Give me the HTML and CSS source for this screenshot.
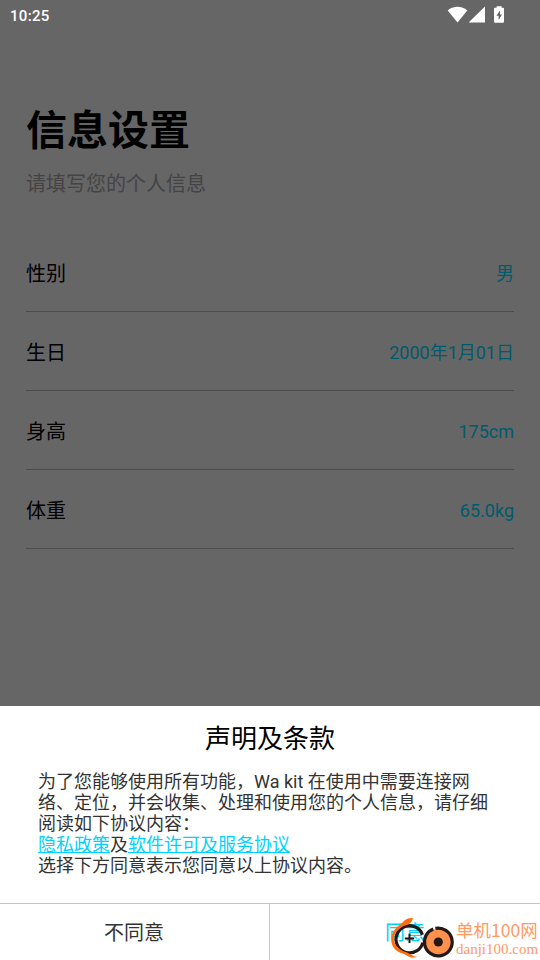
FILE: index.html
```html
<!DOCTYPE html>
<html lang="zh-CN">
<head>
<meta charset="utf-8">
<title>信息设置</title>
<link rel="stylesheet" href="styles.css">
</head>
<body>
<div class="screen">
  <header class="status">
    <span class="clock">10:25</span>
    <svg class="indicators" width="60" height="20" viewBox="446 5 60 20" fill="#fff">
      <path d="M447.7 10.4C453 5.7 462 5.7 467.3 10.4L457.5 22.4Z"/>
      <path d="M485 6.4V22.6H468.6Z"/>
      <path fill-rule="evenodd" d="M496.6 6.2h5v1.6h1.4q1 0 1 1v13q0 1-1 1h-8q-1 0-1-1v-13q0-1 1-1h1.6zM500 10.6l-3.6 5.2h2.2v4.2l3.5-5.4h-2.1z"/>
    </svg>
  </header>
  <main class="content">
    <h1 class="title">信息设置</h1>
    <p class="subtitle">请填写您的个人信息</p>
    <div class="row"><span class="label">性别</span><span class="value">男</span></div>
    <div class="row"><span class="label">生日</span><span class="value">2000年1月01日</span></div>
    <div class="row"><span class="label">身高</span><span class="value">175cm</span></div>
    <div class="row"><span class="label">体重</span><span class="value">65.0kg</span></div>
  </main>
  <section class="sheet">
    <h2 class="sheet-title">声明及条款</h2>
    <p class="terms">为了您能够使用所有功能，Wa kit 在使用中需要连接网<br>络、定位，并会收集、处理和使用您的个人信息，请仔细<br>阅读如下协议内容：<br><span class="link">隐私政策</span>及<span class="link">软件许可及服务协议</span><br>选择下方同意表示您同意以上协议内容。</p>
    <div class="actions">
      <div class="action decline">不同意</div>
      <div class="action agree">同意</div>
    </div>
  </section>
  <div class="watermark">
    <svg class="mark" width="66" height="46" viewBox="390 914 66 46" fill="none">
      <circle cx="409.6" cy="939.3" r="13.6" stroke="#231815" stroke-width="3.200" stroke-dasharray="77 8.450" transform="rotate(14 409.6 939.3)"/>
      <path d="M413 918C406 917.500 404 921 401 924C388 932 388 948 401 953C407 954 409 960 418.500 956.500C413 958 410 952.500 404 951.500C391 945 391 934 402 927C406 924 411 926 413 918Z" fill="#ff6d0c"/>
      <circle cx="438.3" cy="942" r="13" fill="#ff914d"/>
      <circle cx="438.3" cy="942" r="13.9" stroke="#231815" stroke-width="3.200" stroke-dasharray="84.500 2.840" transform="rotate(-102 438.3 942)"/>
      <circle cx="438.3" cy="942" r="4.600" fill="#231815"/>
      <path d="M404.800 938.400h9.400M409.500 933.700v9.400" stroke="#231815" stroke-width="2"/>
    </svg>
    <div class="brand"><span class="brand-name">单机100网</span><span class="brand-url">danji100.com</span></div>
  </div>
</div>
</body>
</html>
```
FILE: styles.css
```css
* { box-sizing: border-box; }
body { margin: 0; font-family: Roboto, "Noto Sans CJK SC", sans-serif; }
h1, h2, p { margin: 0; font-weight: 400; }
.screen { position: relative; width: 540px; height: 960px; overflow: hidden; background: #666; display: flex; flex-direction: column; }
.status { height: 32px; display: flex; justify-content: space-between; align-items: flex-start; padding: 5px 34px 0 10px; color: #fff; }
.clock { font-size: 15px; line-height: 22px; font-weight: 500; letter-spacing: .3px; }
.content { flex: 1; padding: 69px 26px 0; }
.title { font-size: 41px; line-height: 60px; font-weight: 700; color: #000; }
.subtitle { margin-top: 8px; font-size: 20px; line-height: 30px; color: #444; }
.row { height: 79px; display: flex; justify-content: space-between; align-items: center; padding-top: 3px; border-bottom: 1px solid #4d4d4d; }
.subtitle + .row { margin-top: 34px; }
.label { font-size: 20px; line-height: 30px; color: #000; }
.value { font-size: 18px; line-height: 30px; color: #005b6c; }
.sheet { height: 254px; background: #fff; display: flex; flex-direction: column; }
.sheet-title { padding-top: 13px; font-size: 26px; line-height: 40px; text-align: center; color: #000; }
.terms { margin: 12px 0 0 38px; font-size: 18px; line-height: 21px; color: #333; white-space: nowrap; }
.link { color: #00d2ff; text-decoration: underline; text-decoration-thickness: 1px; }
.actions { margin-top: auto; height: 57px; display: flex; border-top: 1px solid #c4c4c4; }
.action { width: 270px; display: flex; justify-content: center; padding-top: 14px; font-size: 20px; line-height: 30px; color: #333; }
.decline { border-right: 1px solid #c4c4c4; padding-right: 1px; }
.agree { color: #00d2ff; }
.watermark { position: absolute; left: 390px; top: 914px; width: 150px; height: 46px; display: flex; color: #ff9a62; }
.mark { flex: none; }
.brand { display: flex; flex-direction: column; padding-top: 6px; white-space: nowrap; }
.brand-name { font-family: "Noto Sans CJK SC", sans-serif; font-size: 17.500px; line-height: 20px; }
.brand-url { font-family: "Liberation Serif", serif; font-size: 15px; line-height: 19px; }
```
